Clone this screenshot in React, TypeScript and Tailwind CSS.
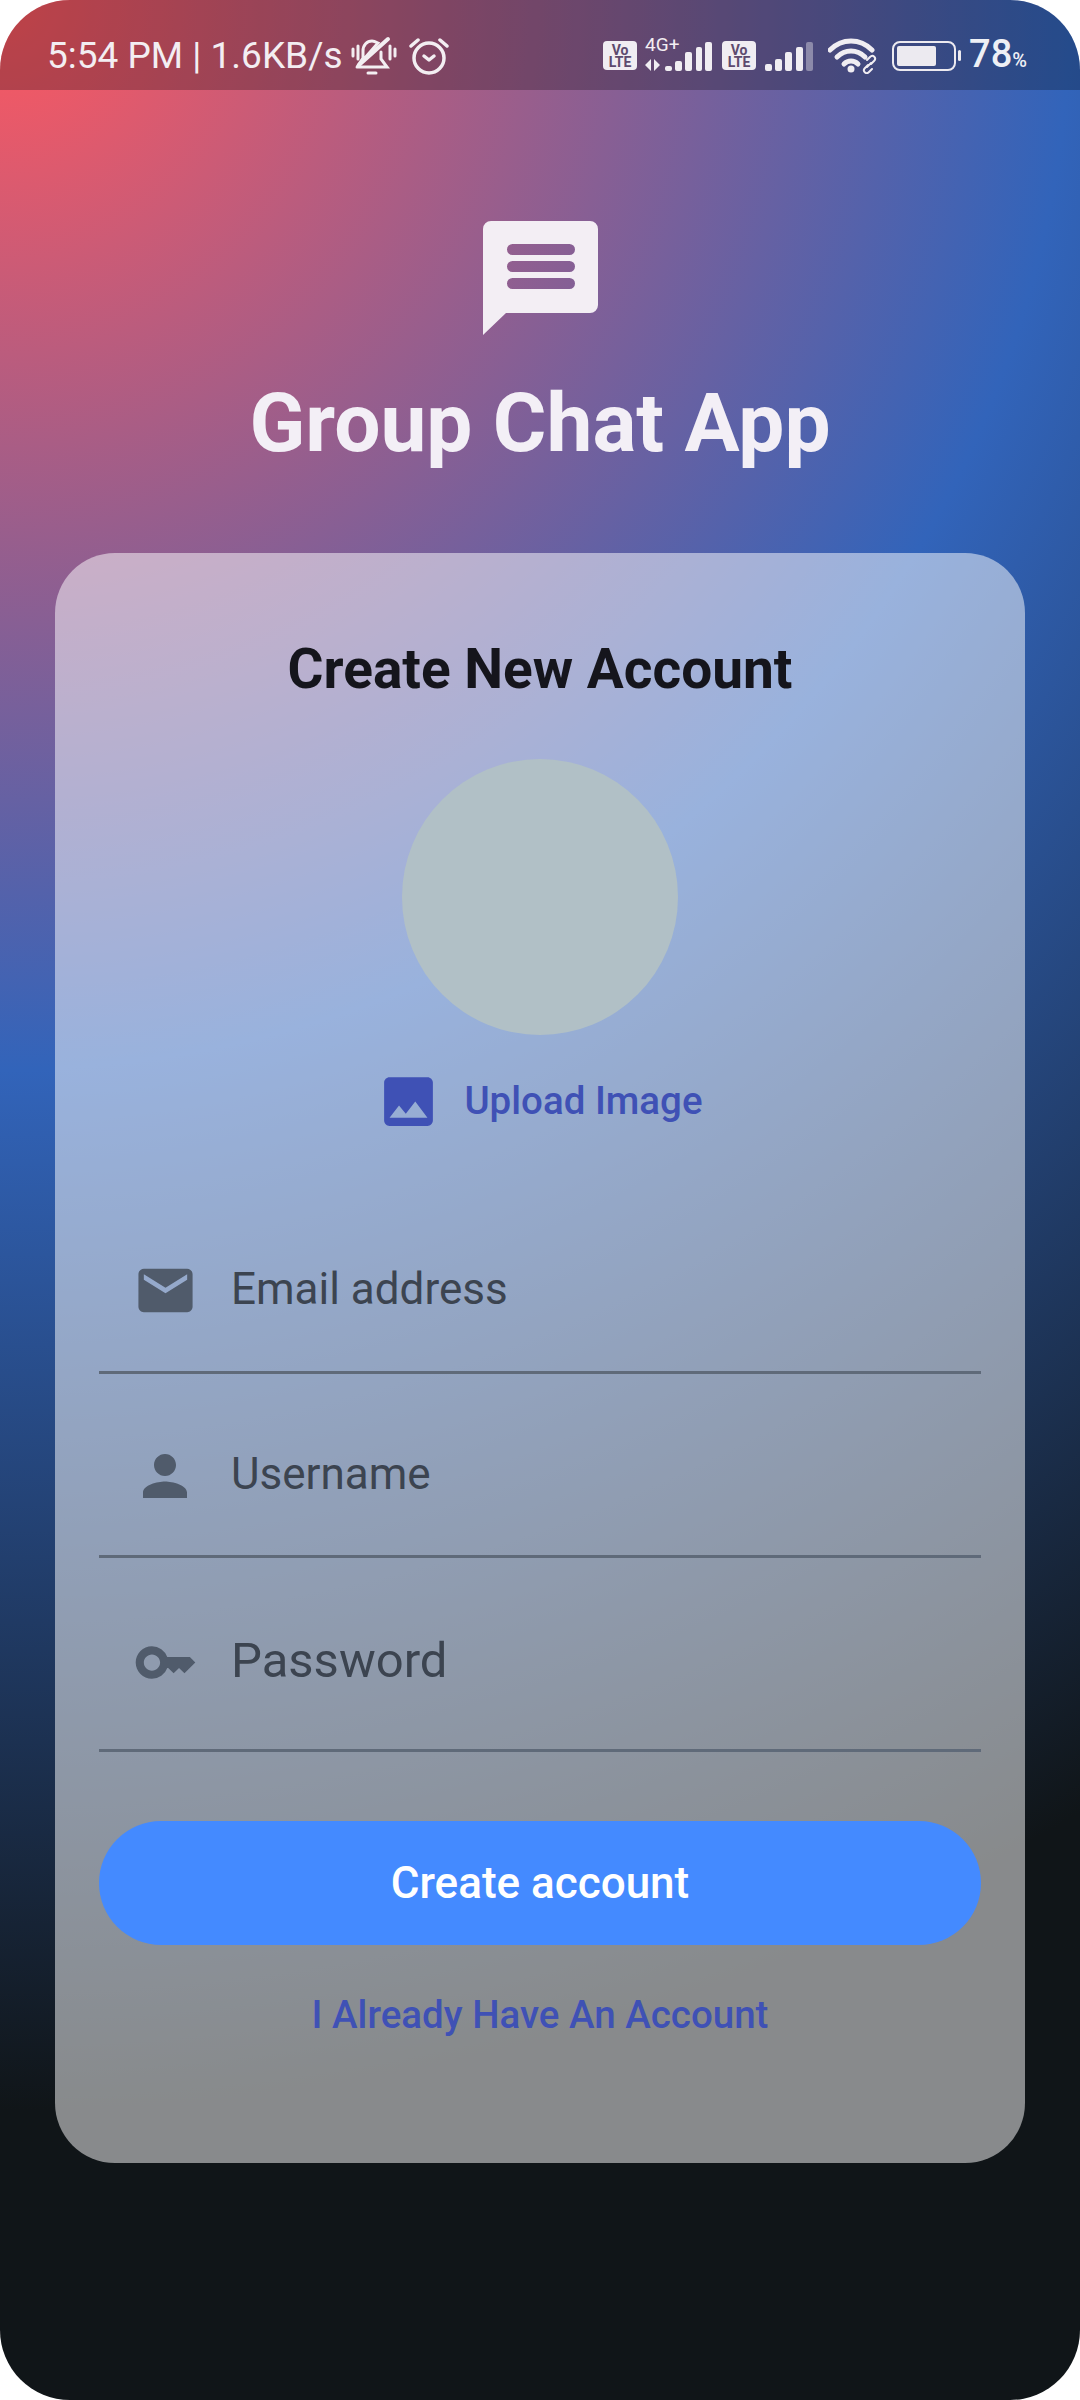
import { ReactNode } from "react";
import { MdEmail, MdImage, MdKey, MdPerson } from "react-icons/md";

function VoLte() {
  return (
    <div className="flex h-[29px] w-[34px] flex-col items-center justify-center rounded-[4px] bg-[#f0edf2] text-[14px] font-bold leading-[12px] text-[#5d4a6e]">
      <span>Vo</span>
      <span>LTE</span>
    </div>
  );
}

function SignalBars() {
  const bars = [
    { x: 0, h: 7 },
    { x: 10, h: 12 },
    { x: 20, h: 19 },
    { x: 31, h: 24 },
  ];
  return (
    <svg width="48" height="30" viewBox="0 0 48 30">
      {bars.map((b) => (
        <rect key={b.x} x={b.x} y={30 - b.h} width="7" height={b.h} rx="2" fill="#f0edf2" />
      ))}
      <rect x="41" y="1" width="7" height="29" rx="2" fill="#f0edf2" opacity="0.4" />
    </svg>
  );
}

function StatusBar() {
  return (
    <div className="flex h-[90px] items-center bg-black/25 pl-[47px] pt-[21px] text-[#f3eef2]">
      <span className="w-[296px] whitespace-nowrap text-[37px] leading-[40px]">5:54 PM | 1.6KB/s</span>
      {/* muted bell */}
      <svg className="ml-[8px]" width="46" height="40" viewBox="0 0 46 40" fill="none" stroke="#f3eef2" strokeWidth="3" strokeLinecap="round">
        <path d="M2 13v7M7 10v13M39 10v13M44 13v7" />
        <path d="M6 31h30l-6-8v-7M27 7c-2-1-4-2-6-2-5 0-9 4-9 10v7l-6 9Z" />
        <path d="M8 29 37 3" strokeWidth="4" />
        <path d="M17 37h8" strokeWidth="3" />
      </svg>
      {/* alarm clock */}
      <svg className="ml-[12px]" width="40" height="38" viewBox="0 0 40 38" fill="none" stroke="#f3eef2" strokeWidth="3.5" strokeLinecap="round" strokeLinejoin="round">
        <circle cx="20" cy="21" r="15" />
        <path d="M15 19l5 4 5-4" />
        <path d="M2 9l7-6M38 9l-7-6" />
      </svg>
      <div className="ml-auto flex items-center pr-[53px]">
        <VoLte />
        <div className="relative ml-[8px] h-[30px] w-[68px]">
          <span className="absolute left-0 top-[-6px] text-[19px] leading-[19px]">4G+</span>
          <svg className="absolute bottom-0 left-0" width="68" height="30" viewBox="0 0 68 30" fill="#f0edf2">
            <path d="M6 18v12l-6-6ZM9 18v12l6-6Z" />
            <rect x="20" y="25" width="7" height="5" rx="2" />
            <rect x="30" y="20" width="7" height="10" rx="2" />
            <rect x="40" y="11" width="7" height="19" rx="2" />
            <rect x="51" y="6" width="6" height="24" rx="2" />
            <rect x="60" y="1" width="7" height="29" rx="2" />
          </svg>
        </div>
        <div className="ml-[9px]">
          <VoLte />
        </div>
        <div className="ml-[9px]">
          <SignalBars />
        </div>
        {/* wifi with link */}
        <svg className="ml-[15px]" width="50" height="36" viewBox="0 0 50 36" fill="none" stroke="#f0edf2" strokeLinecap="round">
          <path d="M2 12C14 0 32 0 44 12" strokeWidth="5" />
          <path d="M9 19c8-8 20-8 28 0" strokeWidth="5" />
          <path d="M16 26c4-4 10-4 14 0" strokeWidth="5" />
          <circle cx="23" cy="31" r="3.500" fill="#f0edf2" stroke="none" />
          <path d="M40 27l-3 3c-3 3 1 7 4 4l3-3M43 26l3-3c3-3-1-7-4-4l-3 3M39 29l4-4" strokeWidth="2" />
        </svg>
        <div className="ml-[14px] flex items-center">
          <div className="flex h-[30px] w-[64px] items-center rounded-[8px] border-[2.5px] border-[#eceaf0] p-[3px]">
            <div className="h-full w-[72%] rounded-[2px] bg-[#eceaf0]" />
          </div>
          <div className="ml-[2px] h-[11px] w-[3px] rounded-full bg-[#eceaf0]" />
        </div>
        <span className="ml-[8px] mt-[2px] text-[38px] font-medium leading-[40px] text-[#eef0f5]">
          78<span className="text-[20px]">%</span>
        </span>
      </div>
    </div>
  );
}

function Field({
  icon,
  label,
  textClass,
  rowClass,
}: {
  icon: ReactNode;
  label: string;
  textClass: string;
  rowClass: string;
}) {
  return (
    <div className={`flex items-center border-b-[3px] border-[#5f6a79] ${rowClass}`}>
      <div className="mt-[4px] flex w-[132px] justify-center text-[#505b6b]">{icon}</div>
      <span className={`text-[#3c4450] ${textClass}`}>{label}</span>
    </div>
  );
}

export default function App() {
  return (
    <div className="bg-white font-['Roboto',sans-serif]">
      <div className="h-[2400px] w-[1080px] overflow-hidden rounded-[70px] bg-[radial-gradient(circle_at_0_0,#ff585f_0px,#3264ba_1070px,#101518_2110px)]">
        <StatusBar />

        <div className="flex flex-col items-center pt-[131px]">
          <svg width="115" height="114" viewBox="0 0 115 114" fill="#f3eef4">
            <path
              fillRule="evenodd"
              d="M8 0h99a8 8 0 0 1 8 8v76a8 8 0 0 1-8 8H23L0 114V8a8 8 0 0 1 8-8ZM29.500 23a5.500 5.500 0 0 0 0 11h57a5.500 5.500 0 0 0 0-11ZM29.500 40a5.500 5.500 0 0 0 0 11h57a5.500 5.500 0 0 0 0-11ZM29.500 57a5.500 5.500 0 0 0 0 11h57a5.500 5.500 0 0 0 0-11Z"
            />
          </svg>
          <h1 className="mt-[41px] text-[82px] font-bold leading-[94px] text-[#f3eff6]">Group Chat App</h1>
        </div>

        <div className="mx-[55px] mt-[83px] h-[1610px] rounded-[60px] bg-white/50 px-[44px]">
          <h2 className="pt-[81px] text-center text-[55px] font-bold leading-[70px] text-[#15151c]">Create New Account</h2>
          <div className="mx-auto mt-[55px] h-[276px] w-[276px] rounded-full bg-[#b1c0c6]" />
          <div className="mt-[41px] flex h-[50px] items-center justify-center pr-[1px] text-[#3f51b5]">
            <MdImage size={65} />
            <span className="ml-[23px] text-[38.5px] font-medium leading-[50px]">Upload Image</span>
          </div>

          <div className="mt-[73px]">
            <Field icon={<MdEmail size={65} />} label="Email address" textClass="text-[44px]" rowClass="h-[175px] pt-[7px]" />
            <Field icon={<MdPerson size={66} />} label="Username" textClass="text-[44px]" rowClass="h-[184px] pt-[18px]" />
            <Field icon={<MdKey size={65} />} label="Password" textClass="text-[49px]" rowClass="h-[194px] pt-[14px]" />
          </div>

          <button className="mt-[69px] h-[124px] w-full rounded-full bg-[#448aff] text-[44px] font-medium text-white">
            Create account
          </button>
          <p className="mt-[46px] text-center text-[38.500px] font-medium leading-[48px] text-[#3f51b5]">I Already Have An Account</p>
        </div>
      </div>
    </div>
  );
}
